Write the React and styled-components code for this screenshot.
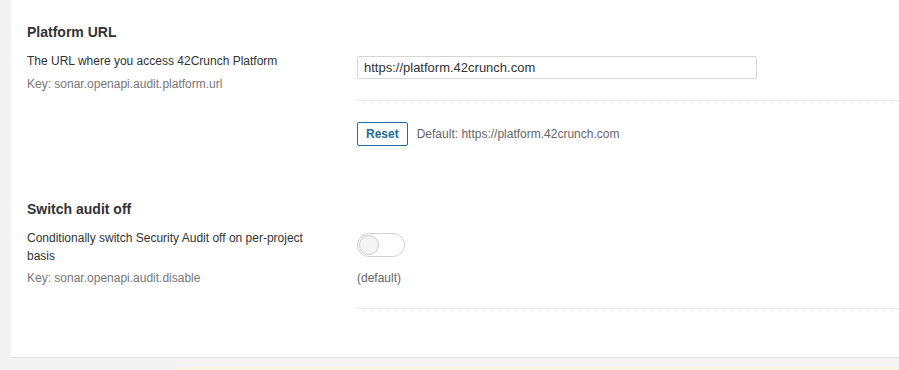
import React from "react";
import styled, { createGlobalStyle } from "styled-components";

const Global = createGlobalStyle`
  html, body { margin: 0; padding: 0; background: #f3f3f3; }
  body { font-family: "Liberation Sans", Arial, Helvetica, sans-serif; color: #333; }
  * { box-sizing: border-box; }
`;

const Page = styled.div`
  width: 899px;
  height: 370px;
  overflow: hidden;
  display: flex;
  flex-direction: column;
  background: #f3f3f3;
`;

const Panel = styled.div`
  margin-left: 11px;
  height: 358px;
  background: #fff;
  border-bottom: 1px solid #e2e2e2;
  padding: 23px 0 0 16px;
  flex-shrink: 0;
`;

const Footer = styled.div`
  flex: 1;
  display: flex;
  align-items: flex-end;
  padding-left: 176px;
`;

const Notice = styled.div`
  height: 3px;
  flex: 1;
  background: #fcf4e3;
`;

const Section = styled.section`
  margin-bottom: ${(p) => p.$gap || 0}px;
`;

const Title = styled.h3`
  margin: 0 0 11px;
  font-size: 14px;
  line-height: 18px;
  font-weight: bold;
  color: #333;
`;

const Row = styled.div`
  display: flex;
  align-items: flex-start;
`;

const Left = styled.div`
  width: 330px;
  padding-right: 30px;
  flex-shrink: 0;
`;

const Desc = styled.div`
  font-size: 12px;
  line-height: 18px;
  color: #333;
`;

const Key = styled.div`
  margin-top: ${(p) => p.$mt}px;
  font-size: 12px;
  line-height: 18px;
  color: #777;
`;

const Right = styled.div`
  flex: 1;
  padding-top: 4px;
`;

const Input = styled.input`
  display: block;
  width: 400px;
  height: 23px;
  margin: 0;
  padding: 0 6px;
  border: 1px solid #d6d6d6;
  border-radius: 2px;
  font-family: "Liberation Sans", Arial, sans-serif;
  font-size: 13px;
  color: #333;
  background: #fff;
  outline: none;
`;

const Changes = styled.div`
  margin-top: ${(p) => p.$mt}px;
  border-top: 1px dotted #dedede;
  padding-top: 21px;
  display: flex;
  align-items: center;
  gap: 9px;
`;

const ResetButton = styled.button`
  height: 24px;
  padding: 0 8px;
  border: 1px solid #236a97;
  border-radius: 2px;
  background: #fff;
  color: #236a97;
  font-family: "Liberation Sans", Arial, sans-serif;
  font-size: 12px;
  font-weight: bold;
  line-height: 22px;
  cursor: pointer;
`;

const Note = styled.span`
  font-size: 12px;
  line-height: 18px;
  color: #666;
`;

const Toggle = styled.button`
  display: flex;
  align-items: center;
  width: 48px;
  height: 24px;
  padding: 0 0 0 1px;
  margin: 0;
  border: 1px solid #d2d2d2;
  border-radius: 12px;
  background: #fff;
  cursor: pointer;
`;

const Knob = styled.span`
  width: 20px;
  height: 20px;
  border-radius: 50%;
  border: 1px solid #cfcfcf;
  background: #f4f4f4;
`;

const DefaultNote = styled.div`
  margin-top: 12px;
  font-size: 12px;
  line-height: 18px;
  color: #666;
`;

export default function App() {
  return (
    <>
      <Global />
      <Page>
        <Panel>
          <Section $gap={54}>
            <Title>Platform URL</Title>
            <Row>
              <Left>
                <Desc>The URL where you access 42Crunch Platform</Desc>
                <Key $mt={5}>Key: sonar.openapi.audit.platform.url</Key>
              </Left>
              <Right>
                <Input readOnly value="https://platform.42crunch.com" />
                <Changes $mt={21}>
                  <ResetButton>Reset</ResetButton>
                  <Note>Default: https://platform.42crunch.com</Note>
                </Changes>
              </Right>
            </Row>
          </Section>
          <Section>
            <Title>Switch audit off</Title>
            <Row>
              <Left>
                <Desc>Conditionally switch Security Audit off on per-project basis</Desc>
                <Key $mt={4}>Key: sonar.openapi.audit.disable</Key>
              </Left>
              <Right>
                <Toggle aria-label="Switch audit off">
                  <Knob />
                </Toggle>
                <DefaultNote>(default)</DefaultNote>
                <Changes $mt={21} />
              </Right>
            </Row>
          </Section>
        </Panel>
        <Footer>
          <Notice />
        </Footer>
      </Page>
    </>
  );
}
